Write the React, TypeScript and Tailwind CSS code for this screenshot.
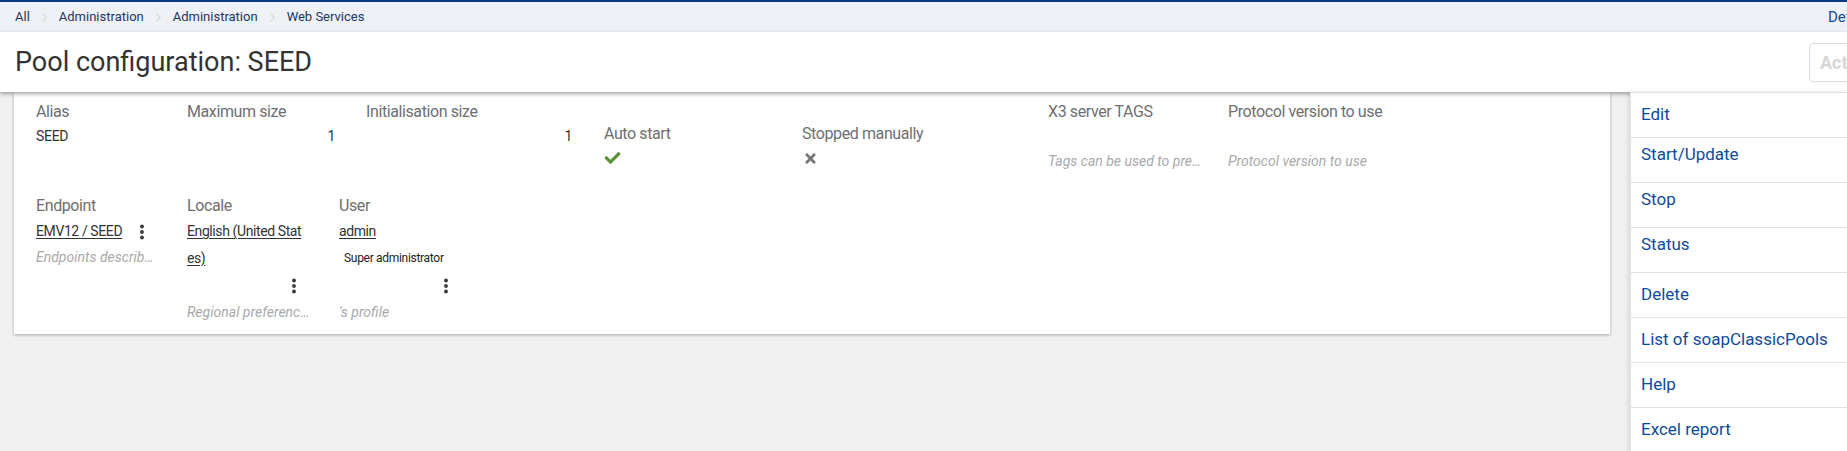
import React from 'react';
import { ChevronRight } from 'lucide-react';
import { FaCheck, FaTimes } from 'react-icons/fa';

const label = "text-[16px] leading-[24px] text-[#6f6f6f] tracking-[-0.4px] whitespace-nowrap";
const value = "text-[14px] leading-[24px] text-[#333] tracking-[-0.3px] whitespace-nowrap";
const hint = "text-[14px] leading-[24px] italic text-[#a9a9a9] whitespace-nowrap";
const link = "text-[14px] leading-[27px] text-[#333] underline underline-offset-2 tracking-[-0.4px] whitespace-nowrap";

function Kebab() {
  return (
    <svg width="6" height="16" viewBox="0 0 6 16" className="shrink-0">
      <circle cx="3" cy="2.5" r="1.9" fill="#3a3a3a" />
      <circle cx="3" cy="8" r="1.9" fill="#3a3a3a" />
      <circle cx="3" cy="13.5" r="1.9" fill="#3a3a3a" />
    </svg>
  );
}

const actions = [
  { name: 'Edit', tight: false },
  { name: 'Start/Update', tight: true },
  { name: 'Stop', tight: true },
  { name: 'Status', tight: true },
  { name: 'Delete', tight: false },
  { name: 'List of soapClassicPools', tight: false },
  { name: 'Help', tight: false },
  { name: 'Excel report', tight: false },
];

export default function App() {
  const crumbs = ['Administration', 'Administration', 'Web Services'];

  return (
    <div className="h-[451px] w-full overflow-hidden bg-[#f1f1f1] font-['Roboto',sans-serif]">
      {/* Top strip */}
      <div className="h-[2px] bg-[#0b3b80]" />

      {/* Breadcrumb */}
      <div className="flex h-[30px] items-center bg-[#eef1f6] pl-[15px] text-[13px] text-[#1d3661]">
        <span>All</span>
        {crumbs.map((c, i) => (
          <React.Fragment key={i}>
            <ChevronRight className="mx-[7px] h-[15px] w-[15px] text-[#c4c4c4]" strokeWidth={1.5} />
            <span>{c}</span>
          </React.Fragment>
        ))}
        <div className="flex-1" />
        <div className="w-[19px] shrink-0 overflow-hidden whitespace-nowrap text-[15px] text-[#0d4aa0]">Default</div>
      </div>

      {/* Header */}
      <div className="relative z-10 flex h-[60px] items-center bg-white pl-[15px] shadow-[0_2px_4px_rgba(0,0,0,0.35)]">
        <h1 className="text-[27px] leading-none text-[#333]">Pool configuration: SEED</h1>
        <div className="flex-1" />
        <div className="w-[38px] shrink-0 overflow-hidden pt-[1px]">
          <div className="flex h-[39px] w-[200px] items-center rounded-[4px] border border-[#dcdcdc] pl-[10px] text-[18px] font-bold text-[#d6d6d6]">
            Actions
          </div>
        </div>
      </div>

      {/* Body */}
      <div className="flex">
        <div className="flex-1 pl-[14px]">
          <div className="w-[1596px] bg-white pb-[10px] pl-[22px] pt-[8px] shadow-[0_1px_3px_rgba(0,0,0,0.3)]">
            {/* Row 1 */}
            <div className="flex h-[94px]">
              <div className="w-[151px]">
                <div className={label}>Alias</div>
                <div className={value}>SEED</div>
              </div>
              <div className="w-[179px]">
                <div className={label}>Maximum size</div>
                <div className={value + ' w-[148px] text-right'}>1</div>
              </div>
              <div className="w-[238px]">
                <div className={label}>Initialisation size</div>
                <div className={value + ' w-[206px] text-right'}>1</div>
              </div>
              <div className="w-[198px] pt-[22px]">
                <div className={label}>Auto start</div>
                <div className="flex h-[24px] items-center">
                  <FaCheck className="h-[16px] w-[17px] text-[#5c9136]" />
                </div>
              </div>
              <div className="w-[246px] pt-[22px]">
                <div className={label}>Stopped manually</div>
                <div className="flex h-[24px] items-center pl-[2px]">
                  <FaTimes className="h-[15px] w-[13px] text-[#767676]" />
                </div>
              </div>
              <div className="w-[180px]">
                <div className={label}>X3 server TAGS</div>
                <div className="h-[25px]" />
                <div className={hint}>Tags can be used to pre…</div>
              </div>
              <div>
                <div className={label}>Protocol version to use</div>
                <div className="h-[25px]" />
                <div className={hint}>Protocol version to use</div>
              </div>
            </div>

            {/* Row 2 */}
            <div className="flex">
              <div className="w-[151px]">
                <div className={label}>Endpoint</div>
                <div className="flex items-center">
                  <div className="w-[103px]">
                    <span className={link}>EMV12 / SEED</span>
                  </div>
                  <Kebab />
                </div>
                <div className={hint + ' leading-[20px]'}>Endpoints describ…</div>
              </div>
              <div className="w-[152px]">
                <div className={label}>Locale</div>
                <div className={link}>English (United Stat</div>
                <div className={link}>es)</div>
                <div className="flex h-[28px] w-[110px] items-center justify-end">
                  <Kebab />
                </div>
                <div className={hint + ' leading-[14px]'}>Regional preferenc…</div>
              </div>
              <div className="w-[152px]">
                <div className={label}>User</div>
                <div className={link}>admin</div>
                <div className="pl-[5px] text-[12px] leading-[27px] tracking-[-0.3px] text-[#222]">Super administrator</div>
                <div className="flex h-[28px] w-[110px] items-center justify-end">
                  <Kebab />
                </div>
                <div className={hint + ' leading-[14px]'}>'s profile</div>
              </div>
            </div>
          </div>
        </div>

        {/* Action panel */}
        <div className="relative z-20 w-[217px] shrink-0 border-l border-t border-[#e2e2e2] bg-white shadow-[-2px_0_4px_rgba(0,0,0,0.1)]">
          {actions.map((a) => (
            <div
              key={a.name}
              className={
                'h-[45px] border-b border-[#e2e2e2] pl-[10px] text-[17px] leading-[20px] text-[#0f4a9c] ' +
                (a.tight ? 'pt-[6px]' : 'pt-[11px]')
              }
            >
              {a.name}
            </div>
          ))}
        </div>
      </div>
    </div>
  );
}
